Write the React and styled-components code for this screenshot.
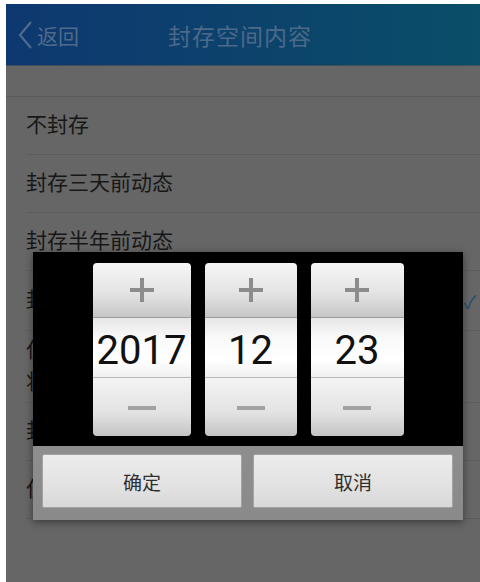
import React from 'react'
import styled, { createGlobalStyle } from 'styled-components'

const Global = createGlobalStyle`
  html, body {
    margin: 0;
    padding: 0;
    background: #ffffff;
  }
  body {
    padding: 4px 0 0 6px;
    font-family: "Noto Sans CJK SC", "Noto Sans", sans-serif;
  }
`

const Screen = styled.div`
  position: relative;
  width: 474px;
  height: 578px;
  background: #666666;
  overflow: hidden;
`

const Header = styled.div`
  height: 61px;
  display: flex;
  align-items: center;
  position: relative;
  background: linear-gradient(90deg, #0e3870 0%, #0c426c 50%, #0a4e68 100%);
  border-bottom: 1px solid #3f4f5c;
`

const Back = styled.div`
  display: flex;
  align-items: center;
  gap: 4px;
  padding-left: 12px;
  color: #4e6b8b;
  font-size: 21px;
`

const Title = styled.div`
  position: absolute;
  left: 0;
  right: 0;
  text-align: center;
  color: #4c6989;
  font-size: 23px;
  letter-spacing: 1px;
  pointer-events: none;
  padding-right: 6px;
`

const Gap = styled.div`
  height: 30px;
  border-bottom: 1px solid #5a5a5a;
`

const Row = styled.div`
  height: ${p => p.h || 58}px;
  margin-left: 20px;
  display: flex;
  flex-direction: column;
  justify-content: center;
  border-bottom: 1px solid #5c5c5c;
  color: #171717;
  font-size: 21px;
  line-height: 32px;
  padding-bottom: 6px;
  box-sizing: border-box;
  position: relative;
`

const Check = styled.span`
  position: absolute;
  right: 4px;
  top: 50%;
  transform: translateY(-50%);
  color: #1c4f6e;
  font-size: 18px;
`

const Dialog = styled.div`
  position: absolute;
  left: 27px;
  top: 248px;
  width: 430px;
  box-shadow: 0 2px 8px rgba(0, 0, 0, 0.45);
`

const PickerArea = styled.div`
  height: 194px;
  background: #000;
  display: flex;
  justify-content: center;
  gap: 14px;
  padding-top: 11px;
  box-sizing: border-box;
`

const Column = styled.div`
  width: ${p => p.w}px;
  height: 173px;
  border-radius: 4px;
  overflow: hidden;
  display: flex;
  flex-direction: column;
`

const Step = styled.div`
  height: ${p => p.h}px;
  display: flex;
  align-items: center;
  justify-content: center;
  background: ${p =>
    p.down
      ? 'linear-gradient(180deg, #f4f4f4 0%, #e2e2e2 60%, #c4c4c4 100%)'
      : 'linear-gradient(180deg, #f6f6f6 0%, #e4e4e4 55%, #c6c6c6 100%)'};
  border-top: ${p => (p.down ? '1px solid #b8b8b8' : 'none')};
  border-bottom: ${p => (p.down ? 'none' : '1px solid #9c9c9c')};
  padding-top: ${p => (p.down ? 2 : 0)}px;
  box-sizing: border-box;
`

const Value = styled.div`
  height: 59px;
  display: flex;
  align-items: center;
  justify-content: center;
  padding-top: 7px;
  box-sizing: border-box;
  background: linear-gradient(180deg, #e6e6e6 0%, #fafafa 35%, #ffffff 70%, #f0f0f0 100%);
  font-family: Roboto, "Liberation Sans", sans-serif;
  font-size: 40px;
  line-height: 40px;
  color: #111111;
`

const ButtonBar = styled.div`
  background: linear-gradient(180deg, #8e8e8e 0%, #8a8a8a 100%);
  display: flex;
  gap: 11px;
  padding: 8px 10px 12px 9px;
`

const Button = styled.div`
  flex: 1;
  height: 54px;
  display: flex;
  align-items: center;
  justify-content: center;
  background: linear-gradient(180deg, #ececec 0%, #e2e2e2 60%, #d8d8d8 100%);
  border: 1px solid #a4a4a4;
  border-radius: 2px;
  color: #2e2e2e;
  font-size: 19px;
  box-sizing: border-box;
`

const Plus = () => (
  <svg width="26" height="26" viewBox="0 0 26 26">
    <rect x="11" y="1" width="4" height="24" fill="#8c8c8c" />
    <rect x="1" y="11" width="24" height="4" fill="#8c8c8c" />
  </svg>
)

const Minus = () => (
  <svg width="28" height="6" viewBox="0 0 28 6">
    <rect x="0" y="1" width="28" height="4" fill="#a2a2a2" />
  </svg>
)

const Chevron = () => (
  <svg width="15" height="30" viewBox="0 0 15 30">
    <path d="M13 2 L2 15 L13 28" stroke="#4e6b8b" strokeWidth="2.2" fill="none" />
  </svg>
)

const pickers = [
  { value: '2017', w: 98 },
  { value: '12', w: 92 },
  { value: '23', w: 93 },
]

export default function App() {
  return (
    <>
      <Global />
      <Screen>
        <Header>
          <Back>
            <Chevron />
            返回
          </Back>
          <Title>封存空间内容</Title>
        </Header>
        <Gap />
        <Row>不封存</Row>
        <Row>封存三天前动态</Row>
        <Row>封存半年前动态</Row>
        <Row h={60}>
          封存一年前动态
          <Check>✓</Check>
        </Row>
        <Row h={72}>
          <div>仅保留最近</div>
          <div>将被封存</div>
        </Row>
        <Row>封存自定义</Row>
        <Row>仅自己可见</Row>

        <Dialog>
          <PickerArea>
            {pickers.map(p => (
              <Column key={p.value} w={p.w}>
                <Step h={55}>
                  <Plus />
                </Step>
                <Value>{p.value}</Value>
                <Step h={59} down>
                  <Minus />
                </Step>
              </Column>
            ))}
          </PickerArea>
          <ButtonBar>
            <Button>确定</Button>
            <Button>取消</Button>
          </ButtonBar>
        </Dialog>
      </Screen>
    </>
  )
}
